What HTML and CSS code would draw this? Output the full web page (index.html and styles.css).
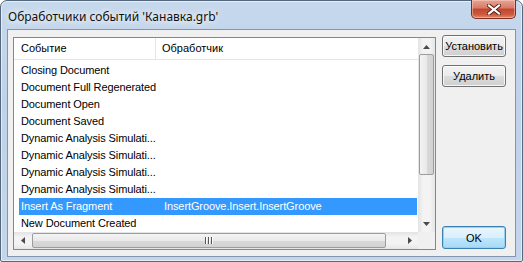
FILE: index.html
```html
<!DOCTYPE html>
<html lang="ru">
<head>
  <meta charset="UTF-8" />
  <title>Обработчики событий</title>
  <link rel="stylesheet" href="styles.css">
</head>
<body>
  <div class="window">
    <div class="titlebar">
      <span class="title">Обработчики событий 'Канавка.grb'</span>
      <button class="close" title="Закрыть">
        <svg width="14" height="11" viewBox="0 0 14 11">
          <path d="M2 1.5 L12 9.5 M12 1.5 L2 9.5" stroke="#5a1a10" stroke-width="4" stroke-linecap="square"/>
          <path d="M2 1.5 L12 9.5 M12 1.5 L2 9.5" stroke="#fff" stroke-width="2.2" stroke-linecap="square"/>
        </svg>
      </button>
    </div>

    <div class="client">
      <div class="listview">
        <div class="lv-top">
          <div class="lv-main">
            <div class="lv-header">
              <div class="hcol hcol-event">Событие</div>
              <div class="hcol hcol-handler">Обработчик</div>
            </div>
            <div class="lv-rows">
              <div class="row"><span class="cell-event">Closing Document</span><span class="cell-handler"></span></div>
              <div class="row"><span class="cell-event">Document Full Regenerated</span><span class="cell-handler"></span></div>
              <div class="row"><span class="cell-event">Document Open</span><span class="cell-handler"></span></div>
              <div class="row"><span class="cell-event">Document Saved</span><span class="cell-handler"></span></div>
              <div class="row"><span class="cell-event">Dynamic Analysis Simulati...</span><span class="cell-handler"></span></div>
              <div class="row"><span class="cell-event">Dynamic Analysis Simulati...</span><span class="cell-handler"></span></div>
              <div class="row"><span class="cell-event">Dynamic Analysis Simulati...</span><span class="cell-handler"></span></div>
              <div class="row"><span class="cell-event">Dynamic Analysis Simulati...</span><span class="cell-handler"></span></div>
              <div class="row selected"><span class="cell-event">Insert As Fragment</span><span class="cell-handler">InsertGroove.Insert.InsertGroove</span></div>
              <div class="row"><span class="cell-event">New Document Created</span><span class="cell-handler"></span></div>
            </div>
          </div>
          <div class="vscroll">
            <div class="sb-btn">
              <svg width="7" height="4" viewBox="0 0 7 4"><polygon points="0,4 3.5,0 7,4" fill="#4a4a4a"/></svg>
            </div>
            <div class="vtrack">
              <div class="vthumb"></div>
            </div>
            <div class="sb-btn">
              <svg width="7" height="4" viewBox="0 0 7 4"><polygon points="0,0 7,0 3.5,4" fill="#4a4a4a"/></svg>
            </div>
          </div>
        </div>
        <div class="lv-bottom">
          <div class="hscroll">
            <div class="sb-btn">
              <svg width="4" height="7" viewBox="0 0 4 7"><polygon points="4,0 4,7 0,3.5" fill="#4a4a4a"/></svg>
            </div>
            <div class="htrack">
              <div class="hthumb">
                <span class="grip"></span><span class="grip"></span><span class="grip"></span>
              </div>
            </div>
            <div class="sb-btn">
              <svg width="4" height="7" viewBox="0 0 4 7"><polygon points="0,0 4,3.5 0,7" fill="#4a4a4a"/></svg>
            </div>
          </div>
          <div class="corner"></div>
        </div>
      </div>

      <div class="buttons">
        <button class="btn">Установить</button>
        <button class="btn">Удалить</button>
        <button class="btn btn-default">OK</button>
      </div>
    </div>
  </div>
</body>
</html>
```

FILE: styles.css
```css
body {
  margin: 0;
  font-family: "Liberation Sans", Arial, sans-serif;
  font-size: 11px;
  color: #000;
}

.window {
  width: 523px;
  height: 262px;
  box-sizing: border-box;
  display: flex;
  flex-direction: column;
  border: 1px solid #55677c;
  border-radius: 7px 7px 2px 2px;
  background: linear-gradient(180deg, #c6d8ec 0%, #bed2e9 40%, #c3d6eb 100%);
  box-shadow: inset 0 0 0 1px rgba(255, 255, 255, 0.55);
}

.titlebar {
  height: 28px;
  flex: none;
  display: flex;
  justify-content: space-between;
  align-items: flex-start;
}

.title {
  margin: 7px 0 0 7px;
  font-family: "Noto Sans", sans-serif;
  font-size: 12px;
  color: #111;
  text-shadow: 0 0 6px #fff, 0 0 10px rgba(255, 255, 255, 0.9);
}

.close {
  width: 45px;
  height: 19px;
  margin: -1px 6px 0 0;
  padding: 0;
  display: flex;
  align-items: center;
  justify-content: center;
  border: 1px solid #7a2e20;
  border-top: none;
  border-radius: 0 0 5px 5px;
  background: linear-gradient(180deg, #e6a595 0%, #d77a66 45%, #c2452c 50%, #cc5a3e 80%, #e08a6e 100%);
  box-shadow: inset 0 0 0 1px rgba(255, 210, 200, 0.5);
}

.client {
  flex: 1;
  margin: 0 6px 4px 6px;
  padding: 5px 9px 6px 5px;
  display: flex;
  gap: 6px;
  background: #f0f0f0;
  border: 1px solid #8396ad;
}

/* list view */
.listview {
  width: 423px;
  height: 213px;
  margin-top: 2px;
  box-sizing: border-box;
  display: flex;
  flex-direction: column;
  background: #fff;
  border: 1px solid #828790;
}

.lv-top {
  flex: 1;
  display: flex;
  min-height: 0;
}

.lv-main {
  flex: 1;
  overflow: hidden;
}

.lv-header {
  height: 21px;
  display: flex;
  border-bottom: 1px solid #e5e5e5;
}

.hcol {
  line-height: 21px;
  padding-left: 7px;
  box-sizing: border-box;
}

.hcol-event {
  width: 142px;
  border-right: 1px solid #e5e5e5;
}

.hcol-handler {
  padding-left: 6px;
}

.lv-rows {
  padding-top: 2px;
}

.row {
  height: 17px;
  line-height: 16px;
  margin: 0 1px 0 5px;
  display: flex;
  white-space: nowrap;
  letter-spacing: -0.1px;
}

.row.selected {
  background: #3399ff;
  color: #fff;
}

.cell-event {
  width: 137px;
  padding-left: 2px;
  overflow: hidden;
}

.cell-handler {
  padding-left: 6px;
}

/* scrollbars */
.vscroll {
  width: 17px;
  display: flex;
  flex-direction: column;
  background: linear-gradient(90deg, #e3e3e3, #f3f3f3 30%, #f3f3f3 70%, #e6e6e6);
}

.sb-btn {
  width: 17px;
  height: 17px;
  flex: none;
  display: flex;
  align-items: center;
  justify-content: center;
}

.vtrack {
  flex: 1;
  padding: 0 1px;
}

.vthumb {
  height: 121px;
  margin-top: -1px;
  box-sizing: border-box;
  border: 1px solid #9c9c9c;
  border-radius: 2px;
  background: linear-gradient(90deg, #f4f4f4, #e9e9e9 50%, #d9d9d9 51%, #d2d2d2);
}

.lv-bottom {
  height: 17px;
  flex: none;
  display: flex;
}

.hscroll {
  flex: 1;
  display: flex;
  background: linear-gradient(180deg, #e3e3e3, #f3f3f3 30%, #f3f3f3 70%, #e6e6e6);
}

.htrack {
  flex: 1;
  padding: 1px 0;
}

.hthumb {
  width: 354px;
  height: 15px;
  margin-left: 1px;
  box-sizing: border-box;
  display: flex;
  align-items: center;
  justify-content: center;
  gap: 1px;
  border: 1px solid #9c9c9c;
  border-radius: 2px;
  background: linear-gradient(180deg, #f4f4f4, #e9e9e9 50%, #d9d9d9 51%, #d2d2d2);
}

.grip {
  width: 1px;
  height: 7px;
  background: #555;
  border-right: 1px solid #fff;
}

.corner {
  width: 17px;
  background: #f0f0f0;
}

/* buttons */
.buttons {
  width: 64px;
  display: flex;
  flex-direction: column;
  gap: 8px;
}

.btn {
  height: 22px;
  padding: 0;
  font-family: "Liberation Sans", Arial, sans-serif;
  font-size: 11px;
  color: #000;
  border: 1px solid #707070;
  border-radius: 3px;
  background: linear-gradient(180deg, #f2f2f2 0%, #ebebeb 50%, #dddddd 51%, #cfcfcf 100%);
  box-shadow: inset 0 0 0 1px rgba(255, 255, 255, 0.8);
}

.btn-default {
  height: 23px;
  margin-top: auto;
  margin-bottom: 1px;
  border-color: #3c7fb1;
  background: linear-gradient(180deg, #eaf6fd 0%, #d9f0fc 50%, #bee6fd 51%, #a7d9f5 100%);
  box-shadow: inset 0 0 0 1px #93d2f2;
}
```
